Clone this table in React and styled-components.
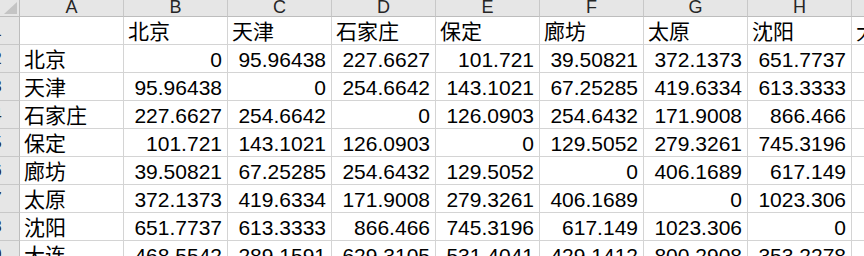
import styled, { createGlobalStyle } from "styled-components";

const cities = ["北京", "天津", "石家庄", "保定", "廊坊", "太原", "沈阳", "大连"];

const dist = [
  ["0", "95.96438", "227.6627", "101.721", "39.50821", "372.1373", "651.7737", "468.5542"],
  ["95.96438", "0", "254.6642", "143.1021", "67.25285", "419.6334", "613.3333", "289.1591"],
  ["227.6627", "254.6642", "0", "126.0903", "254.6432", "171.9008", "866.466", "629.3105"],
  ["101.721", "143.1021", "126.0903", "0", "129.5052", "279.3261", "745.3196", "531.4041"],
  ["39.50821", "67.25285", "254.6432", "129.5052", "0", "406.1689", "617.149", "429.1412"],
  ["372.1373", "419.6334", "171.9008", "279.3261", "406.1689", "0", "1023.306", "800.2908"],
  ["651.7737", "613.3333", "866.466", "745.3196", "617.149", "1023.306", "0", "353.2278"],
  ["468.5542", "289.1591", "629.3105", "531.4041", "429.1412", "800.2908", "353.2278", "0"],
];

const letters = ["A", "B", "C", "D", "E", "F", "G", "H", "I"];

const GlobalStyle = createGlobalStyle`
  html, body {
    margin: 0;
    padding: 0;
    background: #fff;
  }
  body {
    font-family: "Liberation Sans", "Noto Sans CJK SC", sans-serif;
  }
`;

const Viewport = styled.div`
  width: 864px;
  height: 256px;
  overflow: hidden;
`;

const Sheet = styled.div`
  display: grid;
  grid-template-columns: 20px repeat(8, 104px) 108px;
  grid-template-rows: 17px repeat(9, 28px);
  width: max-content;
`;

const Corner = styled.div`
  background: #e6e6e6;
  border-right: 1px solid #bdbdbd;
  border-bottom: 1px solid #bdbdbd;
  box-sizing: border-box;
  display: flex;
  align-items: flex-end;
  justify-content: flex-end;
  padding: 0 2px 2px 0;
`;

const ColHead = styled.div`
  background: #e6e6e6;
  border-right: 1px solid #c8c8c8;
  border-bottom: 1px solid #bdbdbd;
  box-sizing: border-box;
  font-size: 18px;
  line-height: 15px;
  color: #262626;
  text-align: center;
  overflow: hidden;
`;

const RowHead = styled.div`
  background: #e6e6e6;
  border-right: 1px solid #bdbdbd;
  border-bottom: 1px solid #c8c8c8;
  box-sizing: border-box;
  overflow: hidden;
  display: flex;
  align-items: center;
`;

const RowNum = styled.span`
  flex: none;
  width: 40px;
  margin-left: -23px;
  text-align: center;
  font-size: 17px;
  line-height: 20px;
  color: #262626;
`;

const Cell = styled.div`
  border-right: 1px solid #d4d4d4;
  border-bottom: 1px solid #d4d4d4;
  box-sizing: border-box;
  display: flex;
  align-items: flex-end;
  justify-content: ${(p) => (p.$num ? "flex-end" : "flex-start")};
  padding: ${(p) => (p.$num ? "0 5px 0 0" : "0 0 0 4px")};
  font-size: 21px;
  line-height: 24px;
  color: #000;
  white-space: nowrap;
  overflow: hidden;
`;

function SelectAll() {
  return (
    <svg width="13" height="12" viewBox="0 0 13 12">
      <polygon points="13,0 13,12 0,12" fill="#c4c4c4" />
    </svg>
  );
}

export default function App() {
  return (
    <>
      <GlobalStyle />
      <Viewport>
        <Sheet>
          <Corner>
            <SelectAll />
          </Corner>
          {letters.map((l) => (
            <ColHead key={l}>{l}</ColHead>
          ))}

          <RowHead>
            <RowNum>1</RowNum>
          </RowHead>
          <Cell />
          {cities.map((c) => (
            <Cell key={c}>{c}</Cell>
          ))}

          {cities.map((c, i) => [
            <RowHead key={`h${i}`}>
              <RowNum>{i + 2}</RowNum>
            </RowHead>,
            <Cell key={`n${i}`}>{c}</Cell>,
            ...dist[i].map((v, j) => (
              <Cell key={`v${i}-${j}`} $num>
                {v}
              </Cell>
            )),
          ])}
        </Sheet>
      </Viewport>
    </>
  );
}
